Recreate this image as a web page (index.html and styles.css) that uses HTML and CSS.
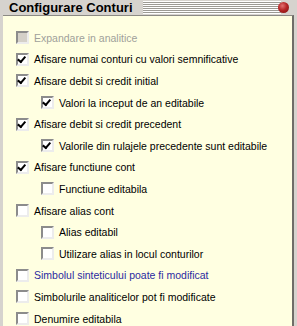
FILE: index.html
```html
<!DOCTYPE html>
<html lang="ro">
<head>
    <meta charset="UTF-8">
    <title>Configurare Conturi</title>
    <link rel="stylesheet" href="styles.css">
</head>
<body>
    <div class="panel">
        <div class="titlebar">
            <span class="title">Configurare Conturi</span>
            <span class="stripes"></span>
            <span class="close"></span>
        </div>
        <div class="content">
            <div class="row disabled"><span class="box"></span>Expandare in analitice</div>
            <div class="row"><span class="box checked"></span>Afisare numai conturi cu valori semnificative</div>
            <div class="row"><span class="box checked"></span>Afisare debit si credit initial</div>
            <div class="row sub"><span class="box checked"></span>Valori la inceput de an editabile</div>
            <div class="row"><span class="box checked"></span>Afisare debit si credit precedent</div>
            <div class="row sub"><span class="box checked"></span>Valorile din rulajele precedente sunt editabile</div>
            <div class="row"><span class="box checked"></span>Afisare functiune cont</div>
            <div class="row sub"><span class="box"></span>Functiune editabila</div>
            <div class="row"><span class="box"></span>Afisare alias cont</div>
            <div class="row sub"><span class="box"></span>Alias editabil</div>
            <div class="row sub"><span class="box"></span>Utilizare alias in locul conturilor</div>
            <div class="row blue"><span class="box"></span>Simbolul sinteticului poate fi modificat</div>
            <div class="row"><span class="box"></span>Simbolurile analiticelor pot fi modificate</div>
            <div class="row"><span class="box"></span>Denumire editabila</div>
        </div>
    </div>
</body>
</html>
```

FILE: styles.css
```css
body {
    margin: 0;
    background-color: #d4d0c8;
    font-family: 'Liberation Sans', Arial, sans-serif;
}
.panel {
    width: 297px;
    height: 326px;
    display: flex;
    flex-direction: column;
    background-color: #d6d3ce;
    overflow: hidden;
}
.titlebar {
    height: 19px;
    display: flex;
    align-items: center;
    padding-left: 9px;
}
.title {
    font-weight: bold;
    font-size: 13px;
    color: #000;
}
.stripes {
    flex: 1;
    height: 13px;
    margin: 0 -3px 0 10px;
    background: repeating-linear-gradient(to bottom, #ffffff 0, #ffffff 1px, #9c9a94 1px, #9c9a94 2px);
}
.close {
    width: 11px;
    height: 11px;
    border-radius: 50%;
    margin-right: 8px;
    position: relative;
    background: radial-gradient(circle at 40% 35%, #e27070 0, #b52525 45%, #7a1010 100%);
}
.content {
    flex: 1;
    margin: 0 3px 0 3px;
    background-color: #ffffe1;
    border-top: 1px solid #8c8a84;
    border-right: 2px solid #6f6d68;
    padding-top: 11px;
}
.row {
    height: 21.6px;
    display: flex;
    align-items: center;
    padding-left: 13px;
    font-size: 10.5px;
    color: #000;
}
.row.sub {
    padding-left: 38px;
}
.row.disabled {
    color: #a09f9a;
}
.row.blue {
    color: #2a2aa0;
}
.box {
    width: 9px;
    height: 9px;
    margin-right: 5px;
    background-color: #fff;
    border-top: 2px solid #8c8c8c;
    border-left: 2px solid #8c8c8c;
    border-right: 2px solid #ececec;
    border-bottom: 2px solid #ececec;
    position: relative;
}
.disabled .box {
    background-color: #d4d0c8;
}
.box.checked::after {
    content: "";
    position: absolute;
    left: 1px;
    top: 0;
    width: 3px;
    height: 6px;
    border-right: 2px solid #000;
    border-bottom: 2px solid #000;
    transform: rotate(40deg);
    transform-origin: 60% 50%;
}
```
